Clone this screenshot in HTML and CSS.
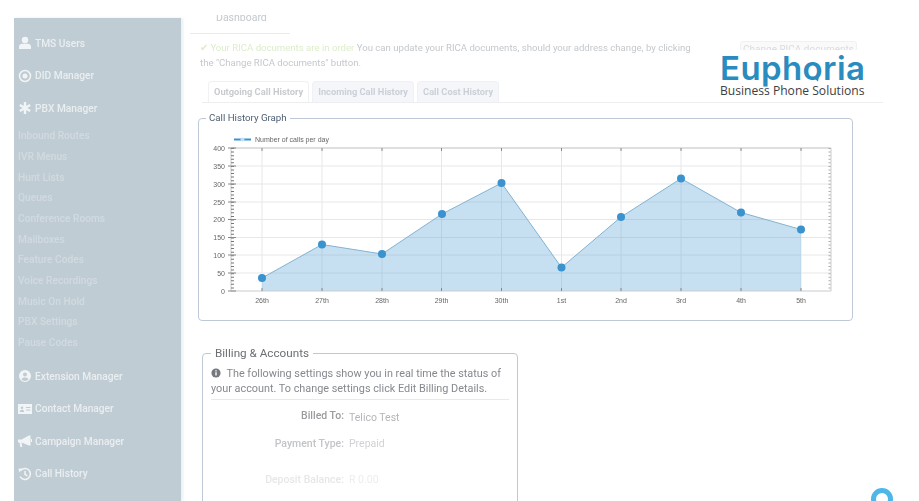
FILE: index.html
```html
<!DOCTYPE html>
<html lang="en">
  <head>
    <meta charset="UTF-8" />
    <title>Euphoria Business Phone Solutions</title>
    <link rel="stylesheet" href="styles.css">
  </head>
  <body>
    <div class="page">
      <nav class="sidebar">
        <a class="nav-main first">
          <svg viewBox="0 0 14 14"><circle cx="7" cy="4" r="3.2" /><path d="M1 13v-2c0-2 1.500-3.200 3.500-3.200h5c2 0 3.500 1.200 3.500 3.200v2z" /></svg>
          TMS Users
        </a>
        <a class="nav-main">
          <svg viewBox="0 0 14 14"><circle cx="7" cy="7" r="5.500" class="ring" /><circle cx="7" cy="7" r="2.500" /></svg>
          DID Manager
        </a>
        <a class="nav-main">
          <svg viewBox="0 0 14 14"><path d="M7 1v12M1.800 4l10.400 6M12.200 4L1.800 10" class="bold-line" /></svg>
          PBX Manager
        </a>
        <div class="nav-sub">
          <a>Inbound Routes</a>
          <a>IVR Menus</a>
          <a>Hunt Lists</a>
          <a>Queues</a>
          <a>Conference Rooms</a>
          <a>Mailboxes</a>
          <a>Feature Codes</a>
          <a>Voice Recordings</a>
          <a>Music On Hold</a>
          <a>PBX Settings</a>
          <a>Pause Codes</a>
        </div>
        <a class="nav-main">
          <svg viewBox="0 0 14 14"><path fill-rule="evenodd" d="M7 1a6 6 0 1 0 0 12A6 6 0 0 0 7 1zm0 2.500a2 2 0 1 1 0 4 2 2 0 0 1 0-4zM3.500 10.500c.5-1.300 2-1.900 3.500-1.900s3 .6 3.500 1.900A5 5 0 0 1 7 12a5 5 0 0 1-3.500-1.500z" /></svg>
          Extension Manager
        </a>
        <a class="nav-main">
          <svg viewBox="0 0 14 14"><path fill-rule="evenodd" d="M0 2h14v10H0zM4 4.500a1.300 1.300 0 1 0 0 2.600 1.300 1.300 0 0 0 0-2.600zM1.800 10h4.400c0-1.500-1-2.200-2.200-2.200S1.800 8.500 1.800 10zM8 5v1h4.500V5zm0 2.500v1h4.500v-1z" /></svg>
          Contact Manager
        </a>
        <a class="nav-main">
          <svg viewBox="0 0 14 14"><path d="M0 5.500h3.500L11 1.500h1.500v10H11L3.500 8.500l.8 4.500H2.300L1.500 8.500H0z" /><rect x="13" y="5" width="1" height="3" /></svg>
          Campaign Manager
        </a>
        <a class="nav-main">
          <svg viewBox="0 0 14 14"><path d="M2.500 3.500A5.500 5.500 0 1 1 2 9.500M7 4v3.300l2.300 1.500" class="ring" /><path d="M0.500 1.500l4.500.3-3.800 3.500z" /></svg>
          Call History
        </a>
      </nav>

      <main class="content">
        <div class="crumb-row">
          <span class="crumb">Dashboard</span>
        </div>

        <div class="alert-row">
          <p class="alert">
            <span class="ok">&#10004; Your RICA documents are in order</span>
            You can update your RICA documents, should your address change, by clicking
            the "Change RICA documents" button.
          </p>
          <button class="btn-light">Change RICA documents</button>
        </div>

        <div class="tabs">
          <a class="tab active">Outgoing Call History</a>
          <a class="tab">Incoming Call History</a>
          <a class="tab">Call Cost History</a>
        </div>

        <fieldset class="box graph-box">
          <legend>Call History Graph</legend>
          <svg class="chart" viewBox="205 130 640 180" width="640" height="180">
            <!-- grid -->
            <g class="grid">
              <path d="M231 184h600M231 148h600M231 219.500h600M231 202h600M231 166h600M231 237.500h600M231 255h600M231 273h600" />
              <path d="M262 148v143M322 148v143M382 148v143M441.500 148v143M501.500 148v143M561.500 148v143M621 148v143M681 148v143M741 148v143M801 148v143" />
            </g>
            <!-- area -->
            <polygon class="area" points="262,278 322,244.500 382,254 442,214 501.500,183 561.500,267.500 621,217 681,178.500 741,212.500 801,229.500 801,291 262,291" />
            <polyline class="line" points="262,278 322,244.500 382,254 442,214 501.500,183 561.500,267.500 621,217 681,178.500 741,212.500 801,229.500" />
            <!-- axes -->
            <path class="frame" d="M231 148h600v143H231z" />
            <line class="minor" x1="232.500" y1="148" x2="232.500" y2="291" />
            <line class="minor right" x1="829.500" y1="148" x2="829.500" y2="291" />
            <path class="major" d="M228 148h8M228 166h8M228 184h8M228 202h8M228 219.500h8M228 237.500h8M228 255h8M228 273h8M228 291h8" />
            <path class="major" d="M262 148v3M322 148v3M382 148v3M441.500 148v3M501.500 148v3M561.500 148v3M621 148v3M681 148v3M741 148v3M801 148v3" />
            <path class="major" d="M262 288v3M322 288v3M382 288v3M441.500 288v3M501.500 288v3M561.500 288v3M621 288v3M681 288v3M741 288v3M801 288v3" />
            <!-- points -->
            <g class="dots">
              <circle cx="262" cy="278" r="4" />
              <circle cx="322" cy="244.500" r="4" />
              <circle cx="382" cy="254" r="4" />
              <circle cx="442" cy="214" r="4" />
              <circle cx="501.500" cy="183" r="4" />
              <circle cx="561.500" cy="267.500" r="4" />
              <circle cx="621" cy="217" r="4" />
              <circle cx="681" cy="178.500" r="4" />
              <circle cx="741" cy="212.500" r="4" />
              <circle cx="801" cy="229.500" r="4" />
            </g>
            <!-- labels -->
            <g class="y-labels">
              <text x="225" y="150.500">400</text>
              <text x="225" y="168.500">350</text>
              <text x="225" y="186.500">300</text>
              <text x="225" y="204.500">250</text>
              <text x="225" y="222">200</text>
              <text x="225" y="240">150</text>
              <text x="225" y="257.500">100</text>
              <text x="225" y="275.500">50</text>
              <text x="225" y="293.500">0</text>
            </g>
            <g class="x-labels">
              <text x="262" y="303">26th</text>
              <text x="322" y="303">27th</text>
              <text x="382" y="303">28th</text>
              <text x="441.500" y="303">29th</text>
              <text x="501.500" y="303">30th</text>
              <text x="561.500" y="303">1st</text>
              <text x="621" y="303">2nd</text>
              <text x="681" y="303">3rd</text>
              <text x="741" y="303">4th</text>
              <text x="801" y="303">5th</text>
            </g>
            <line class="legend-swatch" x1="234" y1="139.500" x2="251" y2="139.500" />
            <circle class="legend-dot" cx="242.500" cy="139.500" r="2" />
            <text class="legend-text" x="255" y="142">Number of calls per day</text>
          </svg>
        </fieldset>

        <fieldset class="box billing-box">
          <legend>Billing &amp; Accounts</legend>
          <p class="billing-info">
            <svg class="info-icon" viewBox="0 0 12 12"><circle cx="6" cy="6" r="5.500" /><rect x="5.200" y="5" width="1.600" height="4" class="cut" /><rect x="5.200" y="2.600" width="1.600" height="1.500" class="cut" /></svg>
            The following settings show you in real time the status of your account. To change settings click Edit Billing Details.
          </p>
          <dl class="billing-rows">
            <dt class="r1">Billed To:</dt>
            <dd class="r1 low">Telico Test</dd>
            <dt class="r2">Payment Type:</dt>
            <dd class="r2">Prepaid</dd>
            <dt class="r3">Deposit Balance:</dt>
            <dd class="r3">R 0.00</dd>
          </dl>
        </fieldset>
      </main>
    </div>

    <div class="logo">
      <span class="logo-name">Euphoria</span>
      <svg class="logo-tail" viewBox="0 0 8 6"><path d="M0 0h8L7 5.500 3 2z" /></svg>
      <span class="logo-sub">Business Phone Solutions</span>
    </div>

    <div class="chat-bubble"></div>
  </body>
</html>
```

FILE: styles.css
```css
html,
body {
  margin: 0;
  height: 501px;
  overflow: hidden;
  background: #fff;
  font-family: Roboto, "Liberation Sans", sans-serif;
}
body {
  position: relative;
}
.page {
  display: flex;
  height: 501px;
  padding-top: 15px;
  box-sizing: border-box;
  filter: blur(0.5px);
}

/* sidebar */
.sidebar {
  width: 167px;
  margin: 3px 0 0 14px;
  padding-left: 4px;
  box-sizing: border-box;
  background: #c0ccd3;
  box-shadow: 2px 0 3px #e6eff6;
  flex-shrink: 0;
  overflow: hidden;
}
.nav-main {
  display: flex;
  align-items: center;
  gap: 3px;
  height: 32.6px;
  font-size: 10.2px;
  font-weight: 500;
  color: #e9eef1;
}
.nav-main.first {
  margin-top: 9px;
}
.nav-main svg {
  width: 14px;
  height: 14px;
  fill: #f2f5f7;
  flex-shrink: 0;
}
.nav-main .ring {
  fill: none;
  stroke: #f2f5f7;
  stroke-width: 1.5;
}
.nav-main .bold-line {
  fill: none;
  stroke: #f2f5f7;
  stroke-width: 2.4;
}
.nav-sub {
  margin-top: 1.5px;
  margin-bottom: 6px;
}
.nav-sub a {
  display: block;
  height: 20.7px;
  line-height: 20.7px;
  font-size: 10.2px;
  font-weight: 500;
  color: #d0dae0;
}

/* main column */
.content {
  flex: 1;
  min-width: 0;
  padding-left: 9px;
}
.crumb-row {
  height: 18px;
  width: 100px;
  overflow: hidden;
  border-bottom: 1px solid #e9ebee;
}
.crumb {
  display: block;
  margin: -4px 0 0 26px;
  font-size: 10.5px;
  line-height: 14px;
  color: #c4c8cd;
}
.alert-row {
  display: flex;
  align-items: flex-start;
  margin: 6px 0 0 10px;
}
.alert {
  width: 495px;
  margin: 0;
  font-size: 9.6px;
  line-height: 15px;
  color: #c4c8cc;
}
.ok {
  color: #dcedcb;
}
.btn-light {
  margin: 1px 0 0 45px;
  width: 117px;
  height: 17px;
  padding: 0;
  border: 1px solid #f0f1f3;
  border-radius: 3px;
  background: #fafafa;
  font-family: inherit;
  font-size: 10px;
  color: #d9dce0;
}
.tabs {
  display: flex;
  gap: 3px;
  margin: 11px 36px 0 12px;
  padding-left: 6px;
  height: 21px;
  border-bottom: 1px solid #eceef0;
}
.tab {
  display: block;
  padding: 0 5px;
  height: 21px;
  line-height: 20px;
  box-sizing: border-box;
  border: 1px solid #f0f1f4;
  border-bottom: 0;
  border-radius: 4px 4px 0 0;
  background: #f5f6fa;
  font-size: 9.3px;
  font-weight: 700;
  color: #ccd0d6;
}
.tab.active {
  background: #fff;
  color: #c8cbce;
}

/* boxes */
.box {
  margin: 0;
  padding: 0;
  border: 1px solid #bfc8d6;
  border-radius: 4px;
}
.box legend {
  padding: 0 3px;
}
.graph-box {
  width: 655px;
  box-sizing: border-box;
  height: 210px;
  margin-top: 8px;
  margin-left: 8px;
  padding: 5px 6px 0;
}
.graph-box legend {
  margin-left: 1px;
  font-size: 9.7px;
  line-height: 14px;
  color: #4d5f72;
}
.chart {
  display: block;
}
.grid path {
  fill: none;
  stroke: #e6e7e9;
  stroke-width: 1;
}
.area {
  fill: rgba(90, 165, 215, 0.34);
}
.line {
  fill: none;
  stroke: #84b2cf;
  stroke-width: 1;
}
.frame {
  fill: none;
  stroke: #c9cbce;
  stroke-width: 1;
}
.minor {
  stroke: #777;
  stroke-width: 3;
  stroke-dasharray: 1 2.575;
}
.minor.right {
  stroke-width: 2;
  stroke: #aaa;
}
.major {
  fill: none;
  stroke: #888;
  stroke-width: 1;
}
.dots circle {
  fill: #3a92cf;
}
.y-labels text,
.x-labels text,
.legend-text {
  font-family: "Liberation Sans", sans-serif;
  font-size: 7px;
  fill: #666;
}
.y-labels text {
  text-anchor: end;
}
.x-labels text {
  text-anchor: middle;
}
.legend-swatch {
  stroke: #3a92cf;
  stroke-width: 2;
}
.legend-dot {
  fill: #c4def0;
}
.billing-box {
  width: 316px;
  box-sizing: border-box;
  height: 170px;
  margin: 24px 0 0 12px;
  padding: 0 8px;
}
.billing-box legend {
  margin-left: 0;
  padding: 0 4px;
  font-size: 11.7px;
  line-height: 16px;
  color: #6b6f74;
}
.billing-info {
  margin: 5px 0 0;
  padding-bottom: 3px;
  border-bottom: 1px solid #e8e9eb;
  font-size: 10.85px;
  line-height: 15px;
  color: #85898e;
}
.info-icon {
  width: 10px;
  height: 10px;
  margin-right: 3px;
  vertical-align: -1px;
  fill: #75797e;
}
.info-icon .cut {
  fill: #fff;
}
.billing-rows {
  display: grid;
  grid-template-columns: 133px 1fr;
  column-gap: 5px;
  margin: 9px 0 0;
  font-size: 10.5px;
  line-height: 14px;
}
.billing-rows dt {
  margin: 0;
  text-align: right;
  font-weight: 500;
}
.billing-rows dd {
  margin: 0;
}
.low {
  padding-top: 2px;
}
dt.r1 {
  color: #9a9c9f;
}
dd.r1 {
  color: #b3b5b8;
}
dt.r2 {
  margin-top: 12px;
  color: #c2c4c7;
}
dd.r2 {
  margin-top: 12px;
  color: #cfd1d4;
}
dt.r3 {
  margin-top: 22px;
  color: #e6e7e9;
}
dd.r3 {
  margin-top: 22px;
  color: #eceded;
}

/* logo sits on top of the page */
.logo {
  position: absolute;
  left: 720px;
  top: 50px;
  width: 147px;
  padding-top: 3px;
  background: #fff;
}
.logo-name {
  display: block;
  font-family: Inter, sans-serif;
  font-size: 33px;
  font-weight: 600;
  line-height: 30px;
  letter-spacing: 0.4px;
  color: #2a8cbe;
}
.logo-tail {
  position: absolute;
  left: 92px;
  top: 27px;
  width: 7px;
  height: 5px;
  fill: #2a8cbe;
}
.logo-sub {
  display: block;
  margin-top: 1px;
  font-family: "Open Sans", sans-serif;
  font-size: 12.1px;
  line-height: 14px;
  color: #3c4043;
}
.chat-bubble {
  position: absolute;
  left: 871px;
  top: 488px;
  width: 22px;
  height: 22px;
  box-sizing: border-box;
  border: 5px solid #4db8e8;
  border-radius: 50%;
}
```
